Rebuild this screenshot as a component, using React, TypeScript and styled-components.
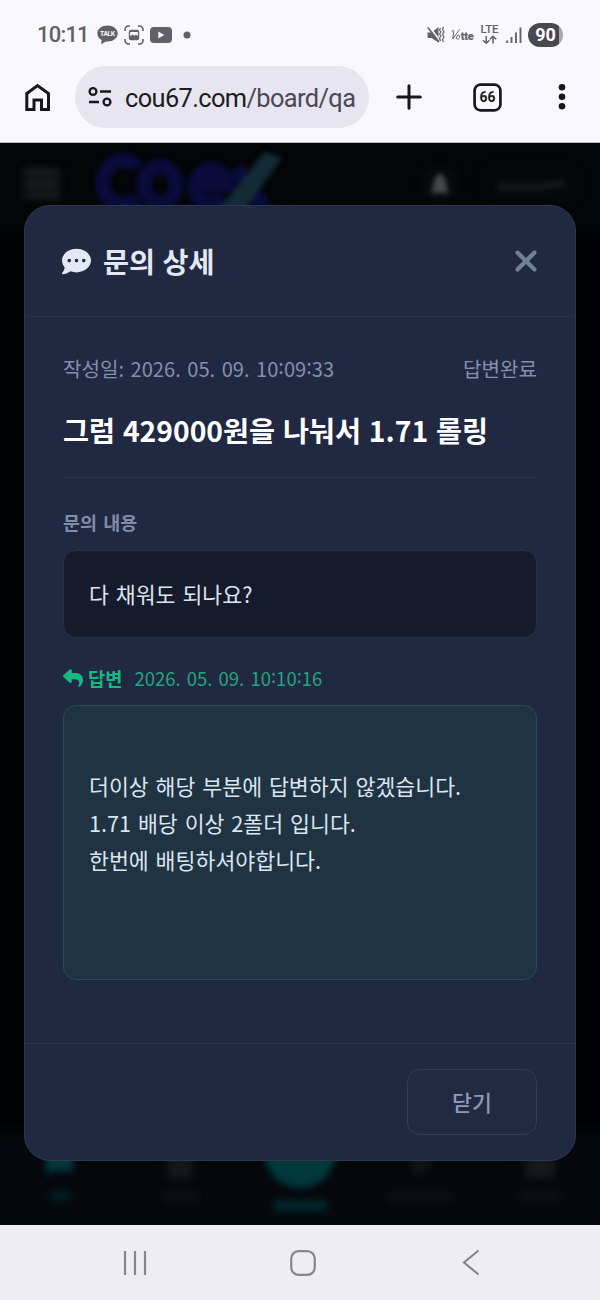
import React from 'react';
import styled, { createGlobalStyle } from 'styled-components';
import { FaCommentDots, FaReply, FaXmark } from 'react-icons/fa6';

const GlobalStyle = createGlobalStyle`
  * { box-sizing: border-box; }
  body { margin: 0; background: #f9f8fe; font-family: "Noto Sans CJK KR", sans-serif; }
  svg { display: block; flex: none; }
`;

const Screen = styled.div`
  width: 600px;
  height: 1300px;
  display: flex;
  flex-direction: column;
  overflow: hidden;
`;

const StatusBar = styled.header`
  height: 66px;
  padding: 4px 37px 0;
  display: flex;
  align-items: center;
  justify-content: space-between;
  background: #f9f8fe;
  color: #626266;
`;

const StatusGroup = styled.div<{ $gap: number }>`
  display: flex;
  align-items: center;
  gap: ${(p) => p.$gap}px;
`;

const Clock = styled.span`
  width: 54px;
  font: 500 22px/28px Roboto, sans-serif;
  letter-spacing: -0.8px;
  white-space: nowrap;
`;

const Battery = styled.span`
  width: 35px;
  height: 24px;
  border-radius: 12px;
  background: linear-gradient(90deg, #49494d 31px, #a9a9ad 31px);
  color: #fff;
  font: 700 18px/24px Roboto, sans-serif;
  text-align: center;
`;

const BrowserBar = styled.nav`
  height: 77px;
  padding: 0 14px 14px 24px;
  display: flex;
  align-items: center;
  background: #f9f8fe;
  border-bottom: 1px solid #bbbac1;
  color: #17171d;
`;

const AddressPill = styled.div`
  width: 294px;
  height: 62px;
  margin-left: 24px;
  padding-left: 13px;
  display: flex;
  align-items: center;
  gap: 13px;
  border-radius: 31px;
  background: #e7e5ef;
`;

const Url = styled.span`
  padding-top: 2px;
  font: 400 25.4px/40px Roboto, sans-serif;
  letter-spacing: -0.62px;
  color: #1c1c23;
  white-space: nowrap;
`;

const UrlPath = styled.span`
  color: #4a4955;
`;

const ToolbarIcon = styled.span<{ $left: number }>`
  margin-left: ${(p) => p.$left}px;
`;

const Viewport = styled.main`
  position: relative;
  height: 1082px;
  display: flex;
  flex-direction: column;
  justify-content: space-between;
  background: #000102;
  overflow: hidden;
`;

const DimHeader = styled.div`
  height: 96px;
  padding: 0 0 10px 24px;
  display: flex;
  align-items: center;
  background: linear-gradient(#030507 78px, #000102 96px);
`;

const DimMenu = styled.div`
  width: 36px;
  height: 31px;
  margin-bottom: 5px;
  background: repeating-linear-gradient(#1b1c1e 0 7px, #0d0e10 7px 12px);
  filter: blur(3.5px);
`;

const DimTabs = styled.div`
  height: 106px;
  padding-top: 12px;
  background: linear-gradient(#000102, #05070c 22px, #06080d);
`;

const Dialog = styled.section`
  position: absolute;
  left: 24px;
  top: 62px;
  width: 552px;
  height: 956px;
  display: flex;
  flex-direction: column;
  border: 1px solid #2c3a4f;
  border-radius: 26px;
  background: #202842;
  overflow: hidden;
`;

const DialogHeader = styled.header`
  height: 111px;
  padding: 0 32px 0 37px;
  display: flex;
  align-items: center;
  border-bottom: 1px solid #25324a;
  color: #e2e8f4;
`;

const DialogTitle = styled.h2`
  flex: 1;
  margin: 0 0 0 12px;
  font-size: 28.3px;
  line-height: 40px;
  font-weight: 700;
  word-spacing: 1px;
`;

const DialogBody = styled.div`
  flex: 1;
  padding: 36px 38px 0;
  display: flex;
  flex-direction: column;
  word-spacing: 2px;
`;

const MetaRow = styled.div`
  display: flex;
  justify-content: space-between;
  font-size: 20.1px;
  line-height: 32px;
  color: #8290ab;
`;

const Subject = styled.h3`
  height: 93px;
  margin: 0;
  padding-top: 25px;
  border-bottom: 1px solid #29354c;
  font-size: 28.3px;
  line-height: 40px;
  font-weight: 700;
  word-spacing: 1.4px;
  color: #fff;
  white-space: nowrap;
`;

const FieldLabel = styled.div<{ $reply?: boolean }>`
  margin-top: ${(p) => (p.$reply ? 25 : 29)}px;
  margin-bottom: ${(p) => (p.$reply ? 12 : 13)}px;
  height: 30px;
  display: flex;
  align-items: center;
  font-size: ${(p) => (p.$reply ? 18.7 : 18.5)}px;
  line-height: 30px;
  font-weight: 700;
  color: ${(p) => (p.$reply ? '#18b981' : '#7f8daa')};
`;

const ReplyIcon = styled(FaReply)`
  margin-right: 5px;
`;

const ReplyTime = styled.span`
  margin-left: 12px;
  font-size: 18.5px;
  font-weight: 400;
  color: #20a67e;
  word-spacing: 2px;
`;

const Raised = styled.span`
  position: relative;
  top: -3px;
`;

const Message = styled.div<{ $reply?: boolean }>`
  height: ${(p) => (p.$reply ? 275 : 88)}px;
  padding: ${(p) => (p.$reply ? '61px 25px' : '24px 25px')};
  border: 1px solid ${(p) => (p.$reply ? '#204f55' : '#25324a')};
  border-radius: 13px;
  background: ${(p) => (p.$reply ? '#1f3343' : '#161b2c')};
  color: #dce5f0;
  font-size: 21.67px;
  line-height: 37px;
  white-space: pre-line;
`;

const DialogFooter = styled.footer`
  height: 117px;
  padding: 25px 38px 0;
  display: flex;
  justify-content: flex-end;
  border-top: 1px solid #29354c;
`;

const CloseButton = styled.button`
  width: 130px;
  height: 66px;
  padding: 0;
  border: 1px solid #303e50;
  border-radius: 13px;
  background: #202a41;
  color: #8d9bb7;
  font: 500 21.67px/30px "Noto Sans CJK KR", sans-serif;
`;

const SystemNav = styled.nav`
  height: 75px;
  padding: 0 120px 0 122px;
  display: flex;
  align-items: center;
  justify-content: space-between;
  background: #eeedf3;
`;

const HomeKey = styled.span`
  margin-right: 5px;
`;

function TalkIcon() {
  return (
    <svg width="21" height="20" viewBox="0 0 21 20">
      <path d="M10.5 .5C4.8 .5 .3 4 .3 8.5c0 2.8 1.7 5 4.4 6.5L4 19.2l5-2.8 1.5.1c5.7 0 10.2-3.500 10.2-8S16.200 .5 10.500 .5Z" fill="#626266" />
      <text x="10.500" y="11" textAnchor="middle" fontSize="6.800" fontWeight="700" fontFamily="Roboto, sans-serif" fill="#f9f8fe" textLength="15">TALK</text>
    </svg>
  );
}

function CaptureIcon() {
  return (
    <svg width="20" height="20" viewBox="0 0 20 20" fill="none" stroke="#626266" strokeWidth="1.600">
      <path d="M6 1H4.500A3.500 3.500 0 0 0 1 4.500V6M14 1h1.500A3.500 3.500 0 0 1 19 4.500V6M1 14v1.500A3.500 3.500 0 0 0 4.500 19H6M19 14v1.500a3.500 3.500 0 0 1-3.500 3.500H14" />
      <rect x="5.500" y="5.500" width="9" height="9" rx="1.500" strokeWidth="1.400" />
      <path d="M5.500 6.500h9M6 13.500v-1.500l2.500-2 1.800 1.200L12 10l2 2v1.500Z" fill="#626266" strokeWidth="1" />
    </svg>
  );
}

function VideoIcon() {
  return (
    <svg width="22" height="16" viewBox="0 0 22 16">
      <rect width="22" height="16" rx="4" fill="#626266" />
      <path d="m8.300 4.500 6 3.500-6 3.500Z" fill="#f9f8fe" />
    </svg>
  );
}

function MuteIcon() {
  return (
    <svg width="18" height="18" viewBox="0 0 18 18" fill="#626266">
      <path d="M.5 6.500h4l7-5.500v15.500L4.500 12h-3a1 1 0 0 1-1-1Z" />
      <path d="m2 .5 12 15.500" stroke="#f9f8fe" strokeWidth="1.800" />
      <path d="m.8 1.500 11.200 14.500" stroke="#626266" strokeWidth="1.600" />
      <path d="m13.500 2-1 2 1.500 2-1.500 2 1.500 2-1.500 2 1 3M16.500 1l-1 2.500L17 6l-1.500 2.500L17 11l-1.500 2.500 1 2.500" fill="none" stroke="#626266" strokeWidth="1.200" />
    </svg>
  );
}

function VolteIcon() {
  return (
    <svg width="23" height="14" viewBox="0 0 23 14" fill="#626266">
      <path d="M.7 3.500c1-1.500 2.200-1.500 2 .2L1.800 11 8.500 1.500M6.200 7.500c2.800-1.500 3.500 2 1.200 3.500-2.300 1-2.700-2-.5-3.800" fill="none" stroke="#626266" strokeWidth="1" />
      <text x="9.800" y="11.500" fontSize="11" fontWeight="900" fontFamily="Roboto, sans-serif" textLength="13">tte</text>
    </svg>
  );
}

function LteIcon() {
  return (
    <svg width="20" height="26" viewBox="0 -3 20 26">
      <text x=".5" y="8" fontSize="11.500" fontWeight="500" fontFamily="Roboto, sans-serif" fill="#626266" textLength="18">LTE</text>
      <path d="M6.200 11v7M3 15.200l3.200 3 3.200-3M13 18.500v-7M9.800 14.300l3.200-3 3.200 3" fill="none" stroke="#626266" strokeWidth="1.500" />
    </svg>
  );
}

function SignalIcon() {
  return (
    <svg width="16" height="17" viewBox="0 0 16 17" fill="none" strokeWidth="1.900" stroke="#626266">
      <path d="M1.200 13.500V16M5.500 10v6M10 5.500V16M14.500 .5V16" />
    </svg>
  );
}

function HomeIcon() {
  return (
    <svg width="27" height="29" viewBox="0 0 27 29" fill="none" stroke="#17171d" strokeWidth="3">
      <path d="M2.800 10.500 13.500 2.500 24.500 10.500V26.500H17.500V17H10V26.500H2.800Z" />
    </svg>
  );
}

function SiteIcon() {
  return (
    <svg width="24" height="20" viewBox="0 0 24 20" fill="none" stroke="#17171d" strokeWidth="2.300">
      <circle cx="5" cy="4.500" r="3.400" />
      <circle cx="19" cy="15" r="3.400" />
      <path d="M12 4.500h11M1 15h10" />
    </svg>
  );
}

function PlusIcon() {
  return (
    <svg width="26" height="26" viewBox="0 0 26 26" stroke="#17171d" strokeWidth="3" strokeLinecap="round">
      <path d="M1.700 13h22.600M13 1.700v22.600" />
    </svg>
  );
}

function TabsIcon() {
  return (
    <svg width="29" height="29" viewBox="0 0 29 29">
      <rect x="1.600" y="1.600" width="25.800" height="25.800" rx="6" fill="none" stroke="#17171d" strokeWidth="2.700" />
      <text x="14.500" y="19.300" textAnchor="middle" fontSize="13.800" fontWeight="700" fontFamily="Roboto, sans-serif" fill="#17171d">66</text>
    </svg>
  );
}

function MoreIcon() {
  return (
    <svg width="8" height="28" viewBox="0 0 8 28" fill="#17171d">
      <circle cx="4" cy="4.300" r="3.300" /><circle cx="4" cy="13.800" r="3.300" /><circle cx="4" cy="23.300" r="3.300" />
    </svg>
  );
}

function DimBrand() {
  return (
    <svg width="540" height="86" viewBox="60 0 540 86">
      <defs><filter id="soft" x="-20%" y="-20%" width="140%" height="140%" colorInterpolationFilters="sRGB"><feGaussianBlur stdDeviation="2.800" /></filter></defs>
      <g filter="url(#soft)">
        <g fill="none" stroke="#0b0b3c" strokeWidth="15">
          <path d="M137 24a20 22 0 1 0 0 31" />
          <ellipse cx="160" cy="42" rx="16" ry="18" />
          <path d="M195 42h32a16 17 0 1 0-3 12M236 25l29 42" />
        </g>
        <path d="M218 68 264 9l18 6-38 53Z" fill="#122b36" />
      </g>
      <g filter="url(#soft)">
        <circle cx="440" cy="41" r="21" fill="#06080a" />
        <path d="M431 50c3-4 2-19 9-19s6 15 9 19Z" fill="#464849" />
        <rect x="480" y="22" width="101" height="38" rx="8" fill="#04060a" stroke="#090b0d" />
        <path d="M497 44h40l28-4" fill="none" stroke="#121417" strokeWidth="9" />
      </g>
    </svg>
  );
}

function DimTabsArt() {
  return (
    <svg width="600" height="94" viewBox="0 0 600 94">
      <defs><filter id="tabsSoft" colorInterpolationFilters="sRGB"><feGaussianBlur stdDeviation="3.500" /></filter></defs>
      <g filter="url(#tabsSoft)">
        <path d="M46 16h27v24H55l-9 3Z" fill="#03383e" />
        <rect x="49" y="59" width="22" height="11" fill="#021c22" />
        <rect x="168" y="20" width="24" height="28" fill="#14181c" />
        <rect x="164" y="61" width="33" height="9" fill="#0d1115" />
        <circle cx="300" cy="21" r="36" fill="#00383d" />
        <rect x="274" y="69" width="53" height="12" fill="#01262c" />
        <path d="M410 23h20v12l-10 10-7-4Z" fill="#101419" />
        <rect x="388" y="61" width="64" height="9" fill="#0d1115" />
        <rect x="526" y="20" width="29" height="27" fill="#15191d" />
        <rect x="519" y="61" width="42" height="9" fill="#0c1014" />
      </g>
    </svg>
  );
}

function Timestamp({ date, time }: { date: string; time: string }) {
  return (
    <>
      {date}{' '}
      {time.split(':').map((part, i) => (
        <React.Fragment key={i}>{i > 0 && <Raised>:</Raised>}{part}</React.Fragment>
      ))}
    </>
  );
}

export default function App() {
  return (
    <Screen>
      <GlobalStyle />
      <StatusBar>
        <StatusGroup $gap={6}>
          <Clock>10:11</Clock>
          <StatusGroup $gap={6}><TalkIcon /><CaptureIcon /><VideoIcon /></StatusGroup>
          <svg width="18" height="8"><circle cx="9" cy="4" r="3.500" fill="#626266" /></svg>
        </StatusGroup>
        <StatusGroup $gap={6}><MuteIcon /><VolteIcon /><LteIcon /><SignalIcon /><Battery>90</Battery></StatusGroup>
      </StatusBar>
      <BrowserBar>
        <HomeIcon />
        <AddressPill><SiteIcon /><Url>cou67.com<UrlPath>/board/qa</UrlPath></Url></AddressPill>
        <ToolbarIcon $left={27}><PlusIcon /></ToolbarIcon>
        <ToolbarIcon $left={51}><TabsIcon /></ToolbarIcon>
        <ToolbarIcon $left={56}><MoreIcon /></ToolbarIcon>
      </BrowserBar>
      <Viewport>
        <DimHeader><DimMenu /><DimBrand /></DimHeader>
        <DimTabs><DimTabsArt /></DimTabs>
        <Dialog>
          <DialogHeader>
            <FaCommentDots size={29} />
            <DialogTitle>문의 상세</DialogTitle>
            <FaXmark size={34} color="#718198" />
          </DialogHeader>
          <DialogBody>
            <MetaRow><span>작성일: <Timestamp date="2026. 05. 09." time="10:09:33" /></span><span>답변완료</span></MetaRow>
            <Subject>그럼 429000원을 나눠서 1.71 롤링</Subject>
            <FieldLabel>문의 내용</FieldLabel>
            <Message>다 채워도 되나요?</Message>
            <FieldLabel $reply><ReplyIcon size={20} />답변<ReplyTime><Timestamp date="2026. 05. 09." time="10:10:16" /></ReplyTime></FieldLabel>
            <Message $reply>{'더이상 해당 부분에 답변하지 않겠습니다.\n1.71 배당 이상 2폴더 입니다.\n한번에 배팅하셔야합니다.'}</Message>
          </DialogBody>
          <DialogFooter><CloseButton>닫기</CloseButton></DialogFooter>
        </Dialog>
      </Viewport>
      <SystemNav>
        <svg width="26" height="26" viewBox="0 0 26 26" stroke="#87868c" strokeWidth="2.200"><path d="M3 1v24M13 1v24M23 1v24" /></svg>
        <HomeKey><svg width="28" height="28" viewBox="0 0 28 28"><rect x="2.200" y="2.200" width="23.600" height="23.600" rx="7.500" fill="none" stroke="#87868c" strokeWidth="2.200" /></svg></HomeKey>
        <svg width="18" height="27" viewBox="0 0 18 27" fill="none" stroke="#87868c" strokeWidth="2.200"><path d="M16.500 1.500 2 13.500l14.500 12" /></svg>
      </SystemNav>
    </Screen>
  );
}
